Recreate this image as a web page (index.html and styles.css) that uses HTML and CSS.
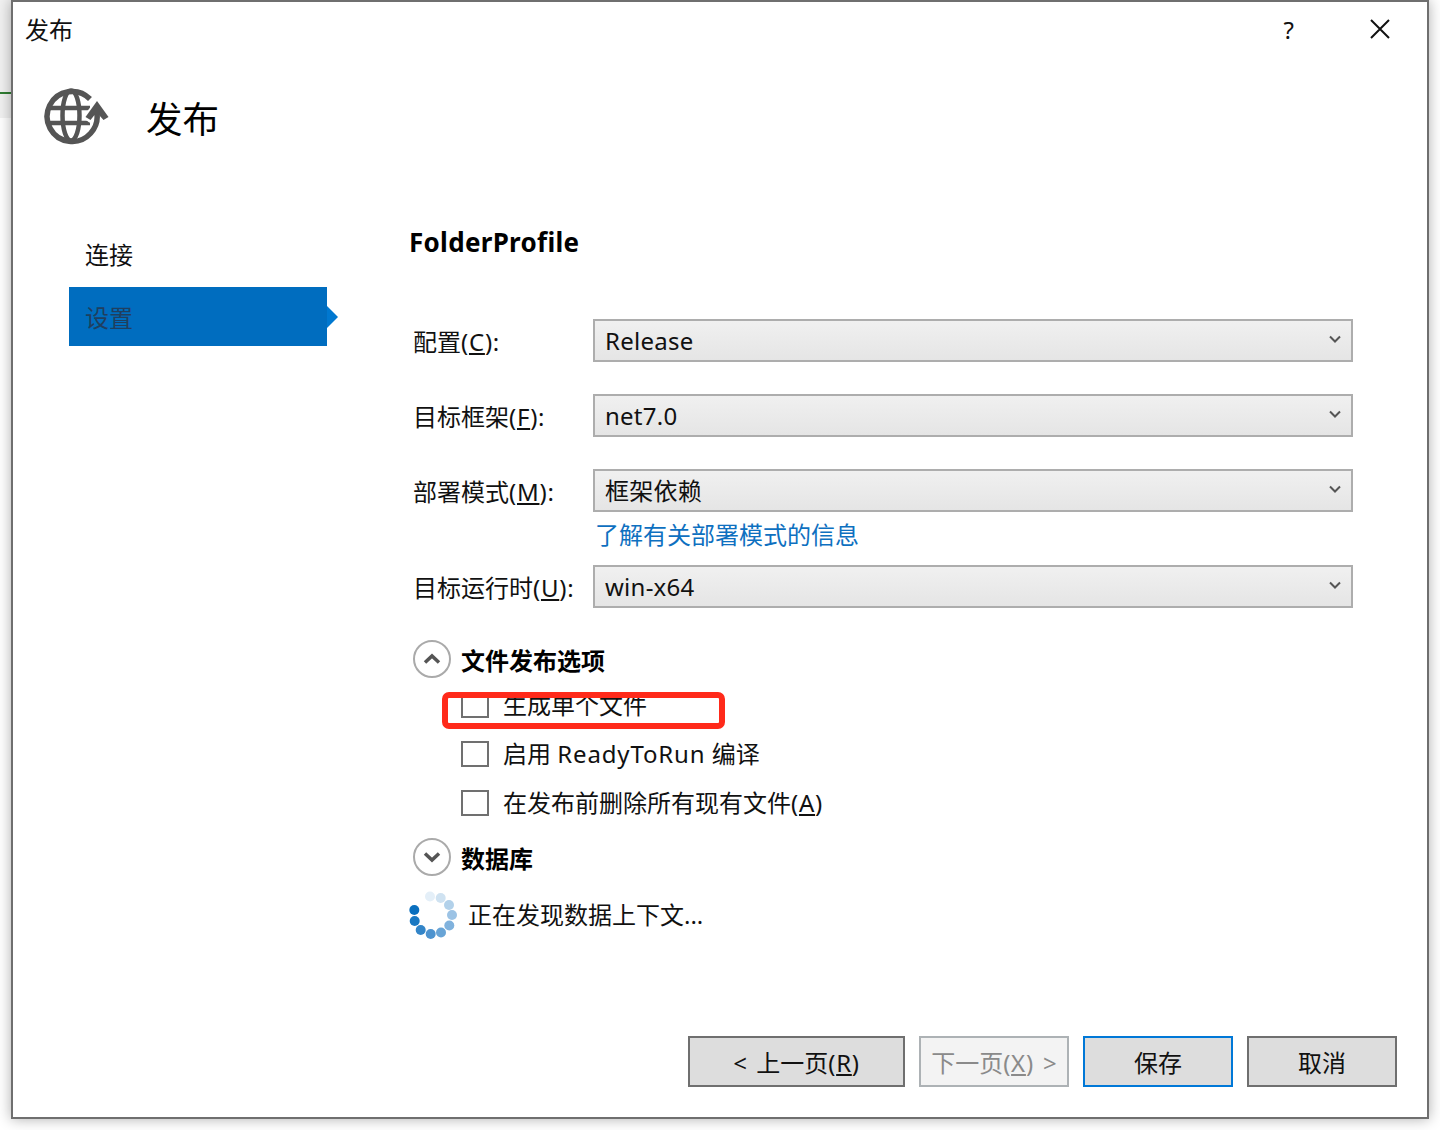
FILE: index.html
```html
<!DOCTYPE html>
<html lang="zh-CN">
<head>
<meta charset="utf-8">
<title>发布</title>
<link rel="stylesheet" href="styles.css">
</head>
<body>
<div class="window">
  <div class="titlebar">
    <span class="title">发布</span>
    <span class="help">?</span>
    <svg class="close" width="20" height="20" viewBox="0 0 20 20"><path d="M1 1 19 19M19 1 1 19" fill="none" stroke="#111" stroke-width="2"/></svg>
  </div>
  <div class="header">
    <svg class="globe" width="70" height="62" viewBox="0 0 70 62">
      <g fill="none" stroke="#555" stroke-width="5.500">
        <ellipse cx="30" cy="31.500" rx="8.500" ry="25" stroke-width="4.500"/>
        <path d="M6 24H49M6 39H49" stroke-width="4.500"/>
        <path d="M45 36 56 22 67 36" stroke="#fff" stroke-width="9"/>
        <path d="M49 15A25 25 0 1 0 55.500 27"/>
      </g>
      <path d="M56 17 67.500 33 62.500 36 58 31H53.500L49.500 36 44.500 33Z" fill="#555"/>
    </svg>
    <span class="page-title">发布</span>
  </div>
  <div class="main">
    <nav class="nav">
      <div class="nav-item">连接</div>
      <div class="nav-item nav-active">设置</div>
    </nav>
    <div class="form">
      <h1 class="profile">FolderProfile</h1>
      <div class="row row-first">
        <label class="label">配置<span class="lat">(<u>C</u>):</span></label>
        <div class="select"><span class="value">Release</span><svg class="chev" width="12" height="8" viewBox="0 0 12 8"><path d="M1 1.5 6 6.500 11 1.500" fill="none" stroke="#555" stroke-width="2"/></svg></div>
      </div>
      <div class="row">
        <label class="label">目标框架<span class="lat">(<u>F</u>):</span></label>
        <div class="select"><span class="value">net7.0</span><svg class="chev" width="12" height="8" viewBox="0 0 12 8"><path d="M1 1.5 6 6.500 11 1.500" fill="none" stroke="#555" stroke-width="2"/></svg></div>
      </div>
      <div class="row">
        <label class="label">部署模式<span class="lat">(<u>M</u>):</span></label>
        <div class="select"><span class="value">框架依赖</span><svg class="chev" width="12" height="8" viewBox="0 0 12 8"><path d="M1 1.5 6 6.500 11 1.500" fill="none" stroke="#555" stroke-width="2"/></svg></div>
      </div>
      <div class="link-row"><a class="link">了解有关部署模式的信息</a></div>
      <div class="row row-tight">
        <label class="label">目标运行时<span class="lat">(<u>U</u>):</span></label>
        <div class="select"><span class="value">win-x64</span><svg class="chev" width="12" height="8" viewBox="0 0 12 8"><path d="M1 1.5 6 6.500 11 1.500" fill="none" stroke="#555" stroke-width="2"/></svg></div>
      </div>
      <div class="section section-files">
        <span class="round"><svg width="18" height="12" viewBox="0 0 18 12"><path d="M2 9.500 9 3 16 9.500" fill="none" stroke="#555" stroke-width="3.500"/></svg></span>
        <strong class="section-title">文件发布选项</strong>
      </div>
      <div class="check-row">
        <span class="box"></span><span class="check-text">生成单个文件</span>
        <span class="annotation"></span>
      </div>
      <div class="check-row"><span class="box"></span><span class="check-text">启用 <span class="wide">ReadyToRun</span> 编译</span></div>
      <div class="check-row"><span class="box"></span><span class="check-text">在发布前删除所有现有文件<span class="lat">(<u>A</u>)</span></span></div>
      <div class="section section-db">
        <span class="round"><svg width="18" height="12" viewBox="0 0 18 12"><path d="M2 2.500 9 9 16 2.500" fill="none" stroke="#555" stroke-width="3.500"/></svg></span>
        <strong class="section-title">数据库</strong>
      </div>
      <div class="loading">
        <svg class="spinner" width="50" height="50" viewBox="0 0 50 50">
          <circle cx="22" cy="6.500" r="5" fill="#e4eff8"/>
          <circle cx="32.700" cy="8" r="5" fill="#cfe2f1"/>
          <circle cx="41" cy="15" r="5" fill="#b2d1ea"/>
          <circle cx="44" cy="25" r="5" fill="#9cc3e5"/>
          <circle cx="41.300" cy="35.500" r="5" fill="#80b2dd"/>
          <circle cx="33" cy="42.500" r="5" fill="#68a4d6"/>
          <circle cx="22.700" cy="44" r="5" fill="#4d93cf"/>
          <circle cx="12.700" cy="40" r="5" fill="#3385c8"/>
          <circle cx="6.700" cy="31" r="5" fill="#1a78c2"/>
          <circle cx="6.300" cy="20" r="5" fill="#0a6fbe"/>
        </svg>
        <span>正在发现数据上下文...</span>
      </div>
    </div>
  </div>
  <div class="footer">
    <button class="btn btn-wide">&lt; 上一页<span class="lat">(<u>R</u>)</span></button>
    <button class="btn btn-disabled">下一页<span class="lat">(<u>X</u>)</span> &gt;</button>
    <button class="btn btn-default">保存</button>
    <button class="btn">取消</button>
  </div>
</div>
</body>
</html>
```

FILE: styles.css
```css
html, body { height: 100%; }
body {
  margin: 0;
  overflow: hidden;
  color: #111;
  font: 24px/1.2 "Noto Sans", "Noto Sans CJK SC", sans-serif;
  background:
    linear-gradient(#2f7d32, #2f7d32) 0 92px / 12px 2px no-repeat,
    linear-gradient(#f1f1f1, #f1f1f1) 0 0 / 12px 118px no-repeat,
    #fff;
}
.lat { letter-spacing: .75px; }
.wide { letter-spacing: .85px; }
.window {
  box-sizing: border-box;
  width: 1418px;
  height: 1119px;
  margin-left: 11px;
  border: 2px solid #6f6f6f;
  background: #fff;
  box-shadow: 0 0 13px rgba(0, 0, 0, .32);
  display: flex;
  flex-direction: column;
}
.titlebar {
  height: 56px;
  display: flex;
  align-items: center;
  padding-left: 12px;
}
.title { flex: 1; }
.help { margin-right: 76px; }
.close { margin: 0 37px 2px 0; }
.header {
  height: 170px;
  box-sizing: border-box;
  display: flex;
  align-items: flex-start;
  padding: 26px 0 0 28px;
}
.globe { flex: none; filter: blur(.5px); }
.page-title {
  font-size: 36.500px;
  line-height: 70px;
  color: #000;
  margin-left: 35px;
}
.main {
  display: grid;
  grid-template-columns: 258px 1fr;
  margin-left: 56px;
}
.nav-item {
  height: 59px;
  line-height: 54px;
  padding-left: 16px;
  box-sizing: border-box;
}
.nav-active {
  position: relative;
  background: #006dbf;
  color: #1f3f5f;
  line-height: 62px;
}
.nav-active::after {
  content: "";
  position: absolute;
  left: 100%;
  top: 19px;
  border-left: 11px solid #0078d0;
  border-top: 11px solid transparent;
  border-bottom: 11px solid transparent;
}
.form { padding-left: 83px; }
.profile {
  margin: 0 0 0 -1px;
  height: 30px;
  font-size: 26px;
  line-height: 28px;
  letter-spacing: .3px;
  font-weight: 700;
  color: #000;
}
.row {
  display: grid;
  grid-template-columns: 183px 760px;
  align-items: center;
  margin-top: 32px;
}
.row-first { margin-top: 61px; }
.row-tight { margin-top: 0; }
.label { padding-left: 3px; position: relative; top: 2px; }
.select {
  box-sizing: border-box;
  height: 43px;
  border: 2px solid #adadad;
  background: linear-gradient(#f0f0f0, #e5e5e5);
  padding-left: 10px;
  line-height: 40px;
  display: flex;
  align-items: center;
  justify-content: space-between;
}
.value { letter-spacing: .25px; }
.chev { margin: 0 10px 4px 0; }
.link-row {
  height: 53px;
  padding-left: 185px;
  line-height: 46px;
}
.link { color: #0e70c0; }
.section {
  height: 38px;
  display: flex;
  align-items: center;
  gap: 10px;
}
.section-files { margin-top: 32px; margin-bottom: 2px; }
.section-db { margin-top: 11px; }
.round {
  box-sizing: border-box;
  width: 38px;
  height: 38px;
  margin-left: 3px;
  border: 2px solid #aaa;
  border-radius: 50%;
  display: flex;
  align-items: center;
  justify-content: center;
}
.section-title { color: #000; font-weight: 700; font-size: 24px; position: relative; top: 2px; }
.check-row {
  position: relative;
  height: 49px;
  display: flex;
  align-items: center;
  gap: 14px;
  padding-left: 51px;
}
.box {
  box-sizing: border-box;
  width: 28px;
  height: 26px;
  border: 2px solid #707070;
  flex: none;
}
.check-text { position: relative; top: 1px; }
.annotation {
  position: absolute;
  left: 32px;
  top: 12px;
  box-sizing: border-box;
  width: 283px;
  height: 37px;
  border: 6px solid #ff2a1a;
  border-radius: 7px;
}
.loading {
  display: flex;
  align-items: center;
  gap: 11px;
  height: 50px;
  margin: 14px 0 0 -2px;
}
.loading span { position: relative; left: -1px; }
.spinner { flex: none; }
.footer {
  margin-top: auto;
  display: flex;
  justify-content: flex-end;
  gap: 14px;
  padding: 0 30px 30px 0;
}
.btn {
  box-sizing: border-box;
  width: 150px;
  height: 51px;
  padding: 3px 0 0;
  border: 2px solid #6f6f6f;
  background: #ddd;
  color: #111;
  font: inherit;
  word-spacing: 3px;
}
.btn-wide { width: 217px; }
.btn-disabled {
  background: #f3f3f3;
  border-color: #adb2b5;
  color: #8a8a8a;
}
.btn-default { border-color: #0078d7; }
```
